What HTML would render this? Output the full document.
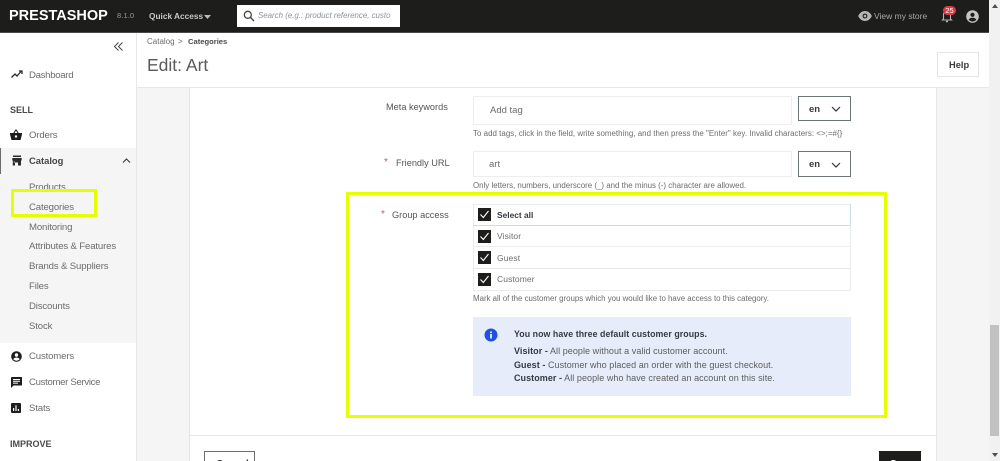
<!DOCTYPE html>
<html><head><meta charset="utf-8"><title>Edit: Art</title>
<style>
html,body{margin:0;padding:0;width:1000px;height:461px;overflow:hidden;background:#f5f5f5}
body{position:relative;font-family:"Liberation Sans",sans-serif;color:#363a41}
.a{position:absolute}
.t{position:absolute;white-space:nowrap;line-height:14px}
.nav{font-size:9.6px;color:#6c6c6c;left:29px;letter-spacing:-.15px}
.sec{font-size:9px;font-weight:bold;color:#4a4a4a;left:10px}
.lbl{font-size:9.2px;color:#555}
.hint{font-size:7.9px;color:#6c6c6c;left:473px;letter-spacing:.01px}
.req{color:#c05c67;font-size:10px}
.box{position:absolute;box-sizing:border-box;background:#fff}
.sel{position:absolute;box-sizing:border-box;left:798px;width:53px;border:1px solid #6c7478;background:#fff}
.cb{position:absolute;left:478px;width:13px;height:13px;background:#1d1d1b}
.info{font-size:9px;color:#5d5d5d;left:514px;letter-spacing:.06px}
.info b{color:#363a41}
svg{position:absolute;display:block}
</style></head><body>

<!-- main background panels -->
<div class="a" style="left:137px;top:33px;width:852px;height:54px;background:#fff;border-bottom:1px solid #e8e8e8"></div>
<div class="a" style="left:189px;top:88px;width:748px;height:373px;background:#fff;border-left:1px solid #e4e4e4;border-right:1px solid #e8e8e8;box-sizing:border-box"></div>
<div class="a" style="left:189px;top:435px;width:748px;height:1px;background:#e8e8e8"></div>

<!-- sidebar -->
<div class="a" style="left:0;top:33px;width:136px;height:428px;background:#fff;border-right:1px solid #e8e8e8"></div>
<div class="a" style="left:0;top:148px;width:136px;height:195px;background:#f5f5f5"></div>
<div class="a" style="left:0;top:148px;width:1px;height:26px;background:#6c6c6c"></div>

<svg style="left:113px;top:41px" width="11" height="11" viewBox="0 0 11 11" fill="none" stroke="#444" stroke-width="1"><path d="M5.5 1.500 1.500 5.500 5.500 9.500M9.500 1.500 5.500 5.500 9.500 9.500"/></svg>

<svg style="left:11px;top:70px" width="12" height="9" viewBox="0 0 12 9" fill="none" stroke="#2b2b2b" stroke-width="1.300"><path d="M.5 7.500 4 4l2 2 4-4.500M8 1h3v3"/></svg>
<div class="t nav" style="top:69px;letter-spacing:-.3px">Dashboard</div>
<div class="t sec" style="top:103px">SELL</div>

<svg style="left:10px;top:129px" width="12" height="11" viewBox="0 0 12 11"><path fill="#1d1d1b" d="M0 4h12v1.200L10.600 11H1.400L0 5.200zM3 4.500 5.500.5h1L9 4.500H7.800L6 1.600 4.200 4.500z"/><circle cx="6" cy="7.500" r="1.200" fill="#fff"/></svg>
<div class="t nav" style="top:129px">Orders</div>

<svg style="left:12px;top:155px" width="10" height="11" viewBox="0 0 10 11"><path fill="#2b2b2b" d="M1 .5h8V2H1zM.3 3h9.400v2.500H9v5H6v-3H3v3H.8v-5H.3z"/><rect x="1.800" y="6.500" width="1" height="1" fill="#f5f5f5"/></svg>
<div class="t" style="left:29px;top:154px;font-size:9.400px;font-weight:bold;color:#444">Catalog</div>
<svg style="left:122px;top:158px" width="9" height="6" viewBox="0 0 9 6" fill="none" stroke="#333" stroke-width="1.100"><path d="M1 4.500 4.500 1 8 4.500"/></svg>

<div class="t nav" style="top:181px">Products</div>
<div class="t nav" style="top:201px">Categories</div>
<div class="t nav" style="top:221px">Monitoring</div>
<div class="t nav" style="top:240px">Attributes &amp; Features</div>
<div class="t nav" style="top:260px">Brands &amp; Suppliers</div>
<div class="t nav" style="top:280px">Files</div>
<div class="t nav" style="top:300px">Discounts</div>
<div class="t nav" style="top:320px">Stock</div>

<svg style="left:11px;top:351px" width="11" height="11" viewBox="0 0 11 11"><circle cx="5.500" cy="5.500" r="5.300" fill="#1d1d1b"/><circle cx="5.500" cy="4" r="1.700" fill="#fff"/><path fill="#fff" d="M2.300 8.300C3 6.800 4.300 6.500 5.500 6.500s2.500.3 3.200 1.800C7.900 9.200 6.800 9.700 5.500 9.700S3.100 9.200 2.300 8.300z"/></svg>
<div class="t nav" style="top:350px">Customers</div>
<svg style="left:11px;top:377px" width="11" height="11" viewBox="0 0 11 11"><path fill="#1d1d1b" d="M1 0h9.500a.5.500 0 0 1 .5.500V8a.5.500 0 0 1-.5.500H2.500L0 11V1a1 1 0 0 1 1-1z"/><path fill="#fff" d="M2 2h7v1H2zM2 3.800h7v1H2zM2 5.600h5v1H2z"/></svg>
<div class="t nav" style="top:376px;letter-spacing:-.32px">Customer Service</div>
<svg style="left:11px;top:403px" width="10" height="10" viewBox="0 0 10 10"><rect width="10" height="10" rx="1" fill="#1d1d1b"/><path fill="#fff" d="M2 5h1.200v3H2zM4.400 2.200h1.200V8H4.400zM6.800 6h1.200v2H6.800z"/></svg>
<div class="t nav" style="top:402px">Stats</div>
<div class="t sec" style="top:437px">IMPROVE</div>

<!-- top bar -->
<div class="a" style="left:0;top:0;width:989px;height:32px;background:#1d1d1b;border-bottom:1px solid #4a4a4a"></div>
<div class="t" style="left:9px;top:9px;font-size:14.500px;font-weight:bold;color:#fff;letter-spacing:0">PRESTASHOP</div>
<div class="t" style="left:117px;top:9px;font-size:7.500px;color:#9a9a9a;letter-spacing:.1px">8.1.0</div>
<div class="t" style="left:149px;top:9px;font-size:8.300px;font-weight:bold;color:#c8c8c8">Quick Access</div>
<svg style="left:204px;top:15px" width="7" height="4" viewBox="0 0 7 4"><path fill="#bbb" d="M0 0h7L3.500 4z"/></svg>
<div class="a" style="left:237px;top:5px;width:163px;height:22px;background:#fff"></div>
<svg style="left:243px;top:10px" width="12" height="12" viewBox="0 0 12 12" fill="none" stroke="#444" stroke-width="1.300"><circle cx="4.800" cy="4.800" r="3.500"/><path d="M7.500 7.500 11 11"/></svg>
<div class="t" style="left:258px;top:9px;font-size:7.900px;font-style:italic;color:#8a9499">Search (e.g.: product reference, custo</div>

<svg style="left:858px;top:11px" width="14" height="10" viewBox="0 0 14 10"><path fill="#b5b5b5" d="M7 0c3 0 5.500 2 6.800 5C12.500 8 10 10 7 10S1.500 8 .2 5C1.500 2 4 0 7 0z"/><circle cx="7" cy="5" r="2.400" fill="#1d1d1b"/><circle cx="7" cy="5" r="1.300" fill="#b5b5b5"/></svg>
<div class="t" style="left:874px;top:9px;font-size:8.500px;color:#a8a8a8">View my store</div>
<svg style="left:941px;top:9px" width="12" height="14" viewBox="0 0 12 14" fill="none" stroke="#b5b5b5" stroke-width="1.100"><path d="M2.500 10V5.500C2.500 3.500 4 2 6 2s3.500 1.500 3.500 3.500V10l1 1h-9z"/><path d="M5 12.500h2" stroke-width="1.500"/></svg>
<div class="a" style="left:943px;top:6px;width:13px;height:9px;border-radius:5px;background:#e0373f;color:#fff;font-size:7.500px;line-height:9px;text-align:center">25</div>
<svg style="left:966px;top:10px" width="13" height="13" viewBox="0 0 13 13"><circle cx="6.500" cy="6.500" r="6.300" fill="#c4c4c4"/><circle cx="6.500" cy="4.800" r="2.100" fill="#1d1d1b"/><path fill="#1d1d1b" d="M2.700 9.900C3.500 8.200 5 7.800 6.500 7.800s3 .4 3.800 2.100c-1 1-2.300 1.600-3.800 1.600s-2.800-.6-3.800-1.600z"/></svg>

<!-- header -->
<div class="t" style="left:147px;top:35px;font-size:8px;color:#6c6c6c">Catalog</div>
<div class="t" style="left:178px;top:35px;font-size:8px;color:#6c6c6c">&gt;</div>
<div class="t" style="left:188px;top:35px;font-size:7.600px;font-weight:bold;color:#4a4a4a">Categories</div>
<div class="t" style="left:147px;top:55px;line-height:20px;font-size:17.500px;color:#5a5a5a">Edit: Art</div>
<div class="box" style="left:937px;top:52px;width:42px;height:25px;border:1px solid #e4e4e4"></div>
<div class="t" style="left:949px;top:58px;font-size:9.300px;font-weight:bold;color:#3a3a3a">Help</div>

<!-- form -->
<div class="t lbl" style="left:386px;top:100px">Meta keywords</div>
<div class="box" style="left:473px;top:96px;width:319px;height:29px;border:1px solid #eeeeee"></div>
<div class="t" style="left:490px;top:104px;font-size:9.500px;color:#6c6c6c">Add tag</div>
<div class="sel" style="top:96px;height:25px"></div>
<div class="t" style="left:809px;top:103px;font-size:9.500px;font-weight:bold;color:#3a3a3a">en</div>
<svg style="left:831px;top:106px" width="10" height="6" viewBox="0 0 10 6" fill="none" stroke="#333" stroke-width="1.200"><path d="M1 1l4 4 4-4"/></svg>
<div class="t hint" style="top:127px;letter-spacing:.04px">To add tags, click in the field, write something, and then press the "Enter" key. Invalid characters: &lt;&gt;;=#{}</div>

<div class="t req" style="left:384px;top:156px">*</div>
<div class="t lbl" style="left:396px;top:156px">Friendly URL</div>
<div class="box" style="left:473px;top:151px;width:319px;height:26px;border:1px solid #eeeeee"></div>
<div class="t" style="left:489px;top:158px;font-size:9.500px;color:#6c6c6c">art</div>
<div class="sel" style="top:151px;height:26px"></div>
<div class="t" style="left:809px;top:158px;font-size:9.500px;font-weight:bold;color:#3a3a3a">en</div>
<svg style="left:831px;top:162px" width="10" height="6" viewBox="0 0 10 6" fill="none" stroke="#333" stroke-width="1.200"><path d="M1 1l4 4 4-4"/></svg>
<div class="t hint" style="top:179px">Only letters, numbers, underscore (_) and the minus (-) character are allowed.</div>

<div class="t req" style="left:381px;top:208px">*</div>
<div class="t lbl" style="left:392px;top:208px">Group access</div>

<div class="box" style="left:473px;top:204px;width:378px;height:87px;border:1px solid #e8ecec"></div>
<div class="a" style="left:473px;top:225px;width:378px;height:1px;background:#c9dfe3"></div>
<div class="a" style="left:473px;top:246px;width:378px;height:1px;background:#eeeeee"></div>
<div class="a" style="left:473px;top:268px;width:378px;height:1px;background:#e8e8e8"></div>
<div class="a" style="left:850px;top:204px;width:1px;height:22px;background:#c9dfe3"></div>

<div class="cb" style="top:208px"></div>
<div class="cb" style="top:230px"></div>
<div class="cb" style="top:251px"></div>
<div class="cb" style="top:273px"></div>
<svg style="left:478px;top:208px" width="13" height="13" viewBox="0 0 13 13" fill="none" stroke="#fff" stroke-width="1.100"><path d="M2.500 6.500l2.800 3L10.500 3"/></svg>
<svg style="left:478px;top:230px" width="13" height="13" viewBox="0 0 13 13" fill="none" stroke="#fff" stroke-width="1.100"><path d="M2.500 6.500l2.800 3L10.500 3"/></svg>
<svg style="left:478px;top:251px" width="13" height="13" viewBox="0 0 13 13" fill="none" stroke="#fff" stroke-width="1.100"><path d="M2.500 6.500l2.800 3L10.500 3"/></svg>
<svg style="left:478px;top:273px" width="13" height="13" viewBox="0 0 13 13" fill="none" stroke="#fff" stroke-width="1.100"><path d="M2.500 6.500l2.800 3L10.500 3"/></svg>
<div class="t" style="left:497px;top:208px;font-size:8.400px;font-weight:bold;color:#363a41">Select all</div>
<div class="t" style="left:497px;top:229px;font-size:8.500px;color:#6c6c6c;letter-spacing:.1px">Visitor</div>
<div class="t" style="left:497px;top:251px;font-size:8.500px;color:#6c6c6c;letter-spacing:.1px">Guest</div>
<div class="t" style="left:497px;top:272px;font-size:8.500px;color:#6c6c6c;letter-spacing:.1px">Customer</div>
<div class="t hint" style="top:292px;letter-spacing:-.01px">Mark all of the customer groups which you would like to have access to this category.</div>

<div class="a" style="left:473px;top:317px;width:378px;height:79px;background:#e6ecfa"></div>
<svg style="left:484px;top:328px" width="14" height="14" viewBox="0 0 14 14"><circle cx="7" cy="7" r="6.500" fill="#1f50e0"/><rect x="6.200" y="6" width="1.600" height="4.500" fill="#fff"/><rect x="6.200" y="3.500" width="1.600" height="1.600" fill="#fff"/></svg>
<div class="t info" style="top:327px;font-size:8.800px"><b>You now have three default customer groups.</b></div>
<div class="t info" style="top:344px"><b>Visitor -</b> All people without a valid customer account.</div>
<div class="t info" style="top:358px"><b>Guest -</b> Customer who placed an order with the guest checkout.</div>
<div class="t info" style="top:371px"><b>Customer -</b> All people who have created an account on this site.</div>

<!-- footer buttons -->
<div class="box" style="left:204px;top:451px;width:51px;height:20px;border:1px solid #6c6c6c"></div>
<div class="t" style="left:216px;top:458px;font-size:10px;font-weight:bold;color:#333">Cancel</div>
<div class="a" style="left:879px;top:451px;width:42px;height:20px;background:#1d1d1b"></div>
<div class="t" style="left:890px;top:458px;font-size:10px;font-weight:bold;color:#fff">Save</div>

<!-- yellow annotations -->
<div class="a" style="left:11px;top:189px;width:86px;height:28px;box-sizing:border-box;border:3px solid #e6ff00"></div>
<div class="a" style="left:346px;top:192px;width:541px;height:226px;box-sizing:border-box;border:3px solid #e6ff00"></div>

<!-- scrollbar -->
<div class="a" style="left:989px;top:0;width:11px;height:461px;background:#f1f1f1"></div>
<div class="a" style="left:990px;top:325px;width:9px;height:111px;background:#c1c1c1"></div>
<svg style="left:992px;top:4px" width="6" height="4" viewBox="0 0 6 4"><path fill="#505050" d="M3 0l3 4H0z"/></svg>
<svg style="left:992px;top:453px" width="6" height="4" viewBox="0 0 6 4"><path fill="#505050" d="M0 0h6L3 4z"/></svg>
</body></html>
